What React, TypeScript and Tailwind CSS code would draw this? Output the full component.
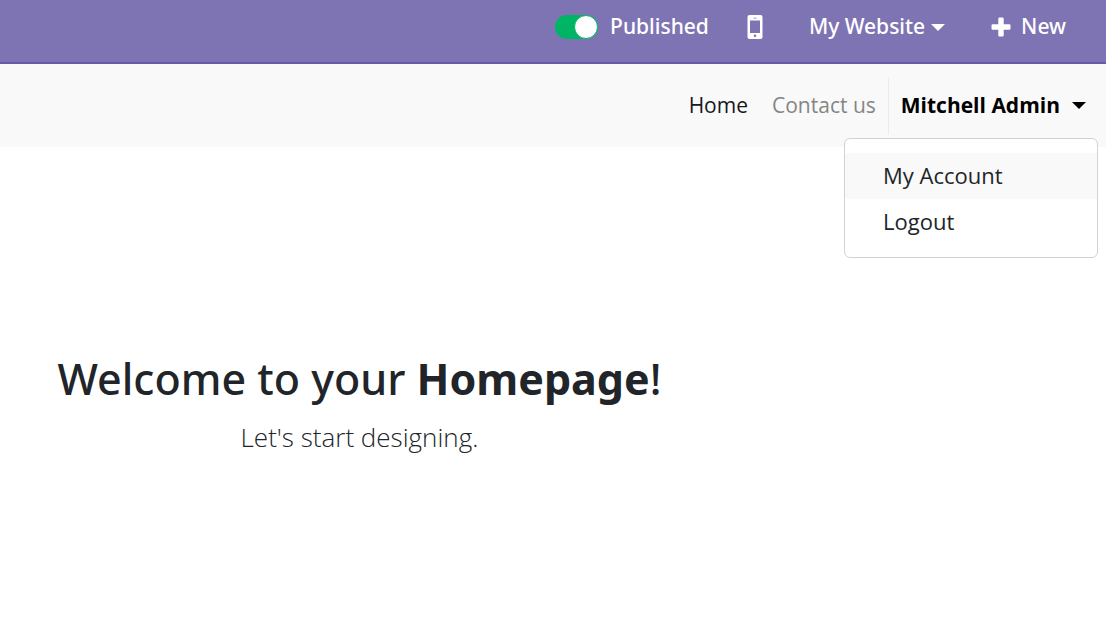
import { useState } from "react";

function MobileIcon() {
  return (
    <svg width="16" height="24" viewBox="0 0 16 24" fill="#fff" aria-hidden="true">
      <path
        fillRule="evenodd"
        d="M2.500 0h11a2 2 0 0 1 2 2v20a2 2 0 0 1-2 2h-11a2 2 0 0 1-2-2v-20a2 2 0 0 1 2-2ZM3 5.500v12.500h10V5.500H3ZM8 19.500a1.300 1.300 0 1 0 0 2.600a1.300 1.300 0 0 0 0-2.600ZM6.500 2.800v.6h3v-.6h-3Z"
      />
    </svg>
  );
}

function PlusIcon() {
  return (
    <svg width="20" height="20" viewBox="0 0 20 20" fill="#fff" aria-hidden="true">
      <path d="M8.500 0.500h3a1.200 1.200 0 0 1 1.200 1.200V7.300h5.600a1.200 1.200 0 0 1 1.200 1.200v3a1.200 1.200 0 0 1-1.200 1.200h-5.600v5.600a1.200 1.200 0 0 1-1.200 1.200h-3a1.200 1.200 0 0 1-1.200-1.200v-5.600H1.700A1.200 1.200 0 0 1 .5 11.500v-3A1.200 1.200 0 0 1 1.700 7.300h5.600V1.700A1.200 1.200 0 0 1 8.500 .5Z" />
    </svg>
  );
}

function Caret() {
  return (
    <svg width="14" height="7" viewBox="0 0 14 7" fill="currentColor" aria-hidden="true">
      <path d="M0 0h14L7 7Z" />
    </svg>
  );
}

export default function App() {
  const [published, setPublished] = useState(true);
  const [open, setOpen] = useState(true);

  return (
    <div className="min-h-screen bg-white font-['Open_Sans','Noto_Sans',sans-serif] text-[#212529]">
      <header className="flex h-16 items-center justify-end border-b-2 border-[#6a5aa5] bg-[#7f74b3] pr-10 pb-2 font-['Noto_Sans','Open_Sans',sans-serif] text-[21px] font-medium text-white">
        <label className="flex cursor-pointer items-center gap-3">
          <input
            type="checkbox"
            checked={published}
            onChange={(e) => setPublished(e.target.checked)}
            className="peer sr-only"
          />
          <span className="flex h-6 w-[43px] items-center justify-start rounded-full bg-gray-400 peer-checked:justify-end peer-checked:bg-[#00b465]">
            <span className="size-6 rounded-full border border-[#00b465] bg-white" />
          </span>
          <span>Published</span>
        </label>
        <button type="button" aria-label="Mobile preview" className="ml-[38px]">
          <MobileIcon />
        </button>
        <button type="button" className="ml-[46px] flex items-center gap-1.5">
          My Website
          <Caret />
        </button>
        <button type="button" className="ml-[46px] flex items-center gap-2.5">
          <PlusIcon />
          New
        </button>
      </header>

      <nav className="flex h-[83px] items-center justify-end bg-[#f9f9f9] pr-5 text-[21px]">
        <a href="#home" className="text-[#16181b]">
          Home
        </a>
        <a href="#contact" className="ml-6 text-[#858585]">
          Contact us
        </a>
        <div className="relative ml-3 flex h-[58px] items-center border-l border-[#e9ecef] pl-3">
          <button
            type="button"
            aria-expanded={open}
            onClick={() => setOpen(!open)}
            className="flex items-center gap-3 font-bold text-black"
          >
            Mitchell Admin
            <Caret />
          </button>
          {open && (
            <div className="absolute top-full -right-3 mt-[3px] w-[254px] rounded-md border border-[#d2d2d2] bg-white pt-3.5 pb-3 text-[22px]">
              <a href="#account" className="flex h-[46px] items-center bg-[#f9f9f9] pl-[38px]">
                My Account
              </a>
              <a href="#logout" className="flex h-[46px] items-center pl-[38px]">
                Logout
              </a>
            </div>
          )}
        </div>
      </nav>

      <main className="w-[65%] pt-[202px] text-center">
        <h1 className="font-['Noto_Sans','Open_Sans',sans-serif] text-[43px] leading-[60px] font-medium">
          Welcome to your <strong className="font-bold">Homepage</strong>!
        </h1>
        <p className="mt-2.5 text-[26px] leading-[36px] font-light">Let's start designing.</p>
      </main>
    </div>
  );
}
